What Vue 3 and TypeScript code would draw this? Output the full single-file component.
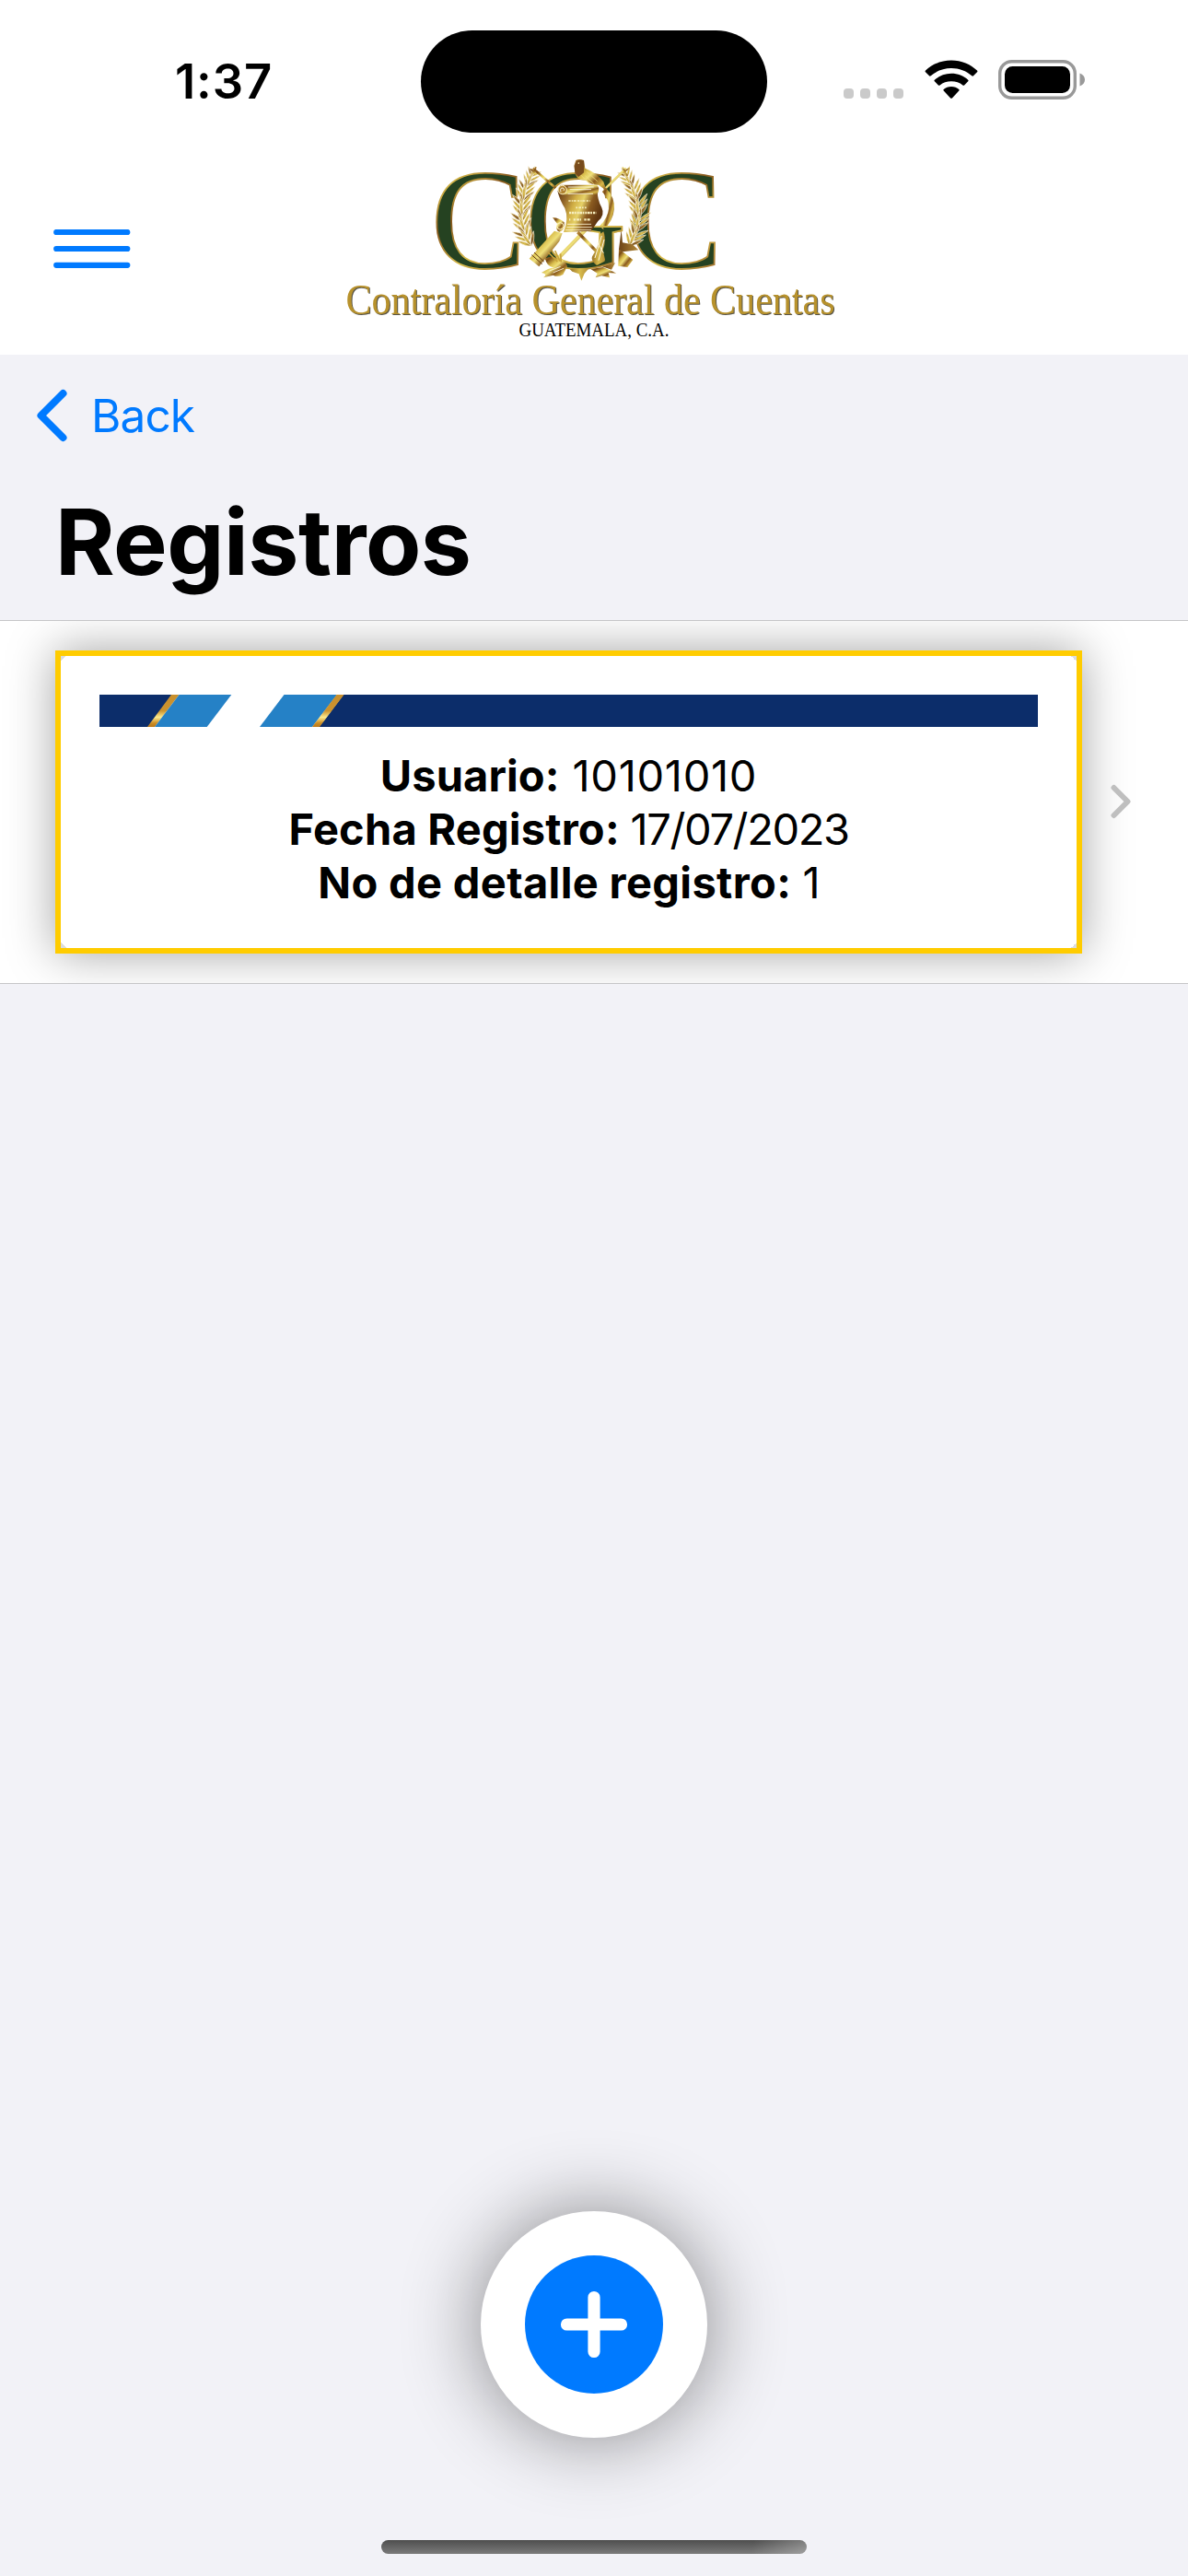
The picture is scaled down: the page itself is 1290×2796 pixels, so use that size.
<script setup lang="ts">
interface Field {
  label: string
  value: string
  spacing: string
  valueSpacing: string
}

const fields: Field[] = [
  { label: 'Usuario:', value: '10101010', spacing: '0.1px', valueSpacing: '0.7px' },
  { label: 'Fecha Registro:', value: '17/07/2023', spacing: '0.2px', valueSpacing: '-1.4px' },
  { label: 'No de detalle registro:', value: '1', spacing: '0.35px', valueSpacing: '-0.9px' },
]

interface Leaf {
  transform: string
  fill: string
}

type Point = [number, number]

// Leaves grow in pairs along each laurel stem, listed from the tip down.
function growLeaves(stem: Point[], perSegment: number): Leaf[] {
  const leaves: Leaf[] = []
  let index = 0
  for (let i = 0; i < stem.length - 1; i++) {
    const [x0, y0] = stem[i]
    const [x1, y1] = stem[i + 1]
    const angle = (Math.atan2(y0 - y1, x0 - x1) * 180) / Math.PI
    for (let j = 0; j < perSegment; j++) {
      const t = j / perSegment
      const x = x0 + (x1 - x0) * t
      const y = y0 + (y1 - y0) * t
      const size = 0.85 + Math.min(index, 5) * 0.06
      for (const side of [-42, -8, 38]) {
        leaves.push({
          transform: `translate(${x.toFixed(1)} ${y.toFixed(1)}) rotate(${(angle + side).toFixed(1)}) scale(${size.toFixed(2)})`,
          fill: (index + (side > 0 ? 1 : 0)) % 3 === 0 ? 'url(#leafDark)' : 'url(#leafLight)',
        })
      }
      index++
    }
  }
  return leaves
}

const leaves: Leaf[] = [
  ...growLeaves([[112, 95], [92, 140], [82, 190], [82, 240], [94, 290], [120, 335]], 3),
  ...growLeaves([[424, 95], [446, 140], [460, 190], [462, 240], [448, 290], [424, 335]], 3),
]
</script>

<template>
  <div class="screen">
    <header class="top">
      <div class="status">
        <div class="time">1:37</div>
        <div class="island"></div>
        <div class="indicators">
          <div class="dots"><i></i><i></i><i></i><i></i></div>
          <svg class="wifi" width="58" height="43" viewBox="0 0 58 43">
            <path d="M29 0.5C40 0.5 50 4.8 57 11.6Q57.8 12.4 57 13.2L53 17.3Q52.2 18.1 51.3 17.3C45.300 12 37.500 9 29 9S12.700 12 6.700 17.300Q5.800 18.100 5 17.300L1 13.200Q0.200 12.400 1 11.600C8 4.800 18 0.500 29 0.500Z" />
            <path d="M29 14.800C36 14.800 42.300 17.400 47.200 21.700Q48 22.500 47.200 23.300L43.100 27.400Q42.300 28.200 41.400 27.400C38 24.600 33.800 23.200 29 23.200S20 24.600 16.600 27.400Q15.700 28.200 14.900 27.400L10.800 23.300Q10 22.500 10.800 21.700C15.700 17.400 22 14.800 29 14.800Z" />
            <path d="M29 29C32.300 29 35.100 30.100 37.300 31.900Q38.200 32.700 37.300 33.600L29.900 41.400Q29 42.300 28.100 41.400L20.700 33.600Q19.800 32.700 20.700 31.900C22.900 30.100 25.700 29 29 29Z" />
          </svg>
          <svg class="battery" width="95" height="43" viewBox="0 0 95 43">
            <rect x="1.700" y="1.700" width="81.600" height="39.600" rx="13" fill="none" stroke="#999" stroke-width="3.400" />
            <rect x="7" y="7" width="71" height="29" rx="8.500" />
            <path d="M88.500 14.500C92 15.800 94 18.500 94 21.500S92 27.200 88.500 28.500Z" fill="#999" />
          </svg>
        </div>
      </div>

      <div class="brand-row">
        <svg class="menu" width="84" height="42" viewBox="0 0 84 42">
          <path d="M3.200 3H80.300M3.200 21H80.300M3.200 38.800H80.300" stroke="#007aff" stroke-width="6.200" stroke-linecap="round" />
        </svg>
        <svg class="logo" width="560" height="220" viewBox="360 160 560 220">
          <defs>
            <linearGradient id="gold" x1="0" y1="0" x2="1" y2="1">
              <stop offset="0" stop-color="#b98a34" />
              <stop offset=".2" stop-color="#7a4a16" />
              <stop offset=".38" stop-color="#d9bd4c" />
              <stop offset=".5" stop-color="#efe07a" />
              <stop offset=".66" stop-color="#8a5a1e" />
              <stop offset=".82" stop-color="#d8b84a" />
              <stop offset="1" stop-color="#7a4a16" />
            </linearGradient>
            <linearGradient id="rim" x1="0" y1="0" x2=".5" y2="1" spreadMethod="reflect">
              <stop offset="0" stop-color="#7a4a16" />
              <stop offset=".25" stop-color="#e2c850" />
              <stop offset=".5" stop-color="#8a5a1e" />
              <stop offset=".75" stop-color="#d9bd4c" />
              <stop offset="1" stop-color="#a87830" />
            </linearGradient>
            <linearGradient id="parchment" x1="0" y1="0" x2="1" y2=".35">
              <stop offset="0" stop-color="#5e3510" />
              <stop offset=".22" stop-color="#94682a" />
              <stop offset=".42" stop-color="#d2b046" />
              <stop offset=".58" stop-color="#e6d268" />
              <stop offset=".76" stop-color="#8a5a20" />
              <stop offset="1" stop-color="#5e3510" />
            </linearGradient>
            <linearGradient id="leafLight" x1="0" y1="0" x2="1" y2="0">
              <stop offset="0" stop-color="#9a7226" />
              <stop offset=".5" stop-color="#d8bc4c" />
              <stop offset="1" stop-color="#b28a34" />
            </linearGradient>
            <linearGradient id="leafDark" x1="0" y1="0" x2="1" y2="0">
              <stop offset="0" stop-color="#6b4216" />
              <stop offset="1" stop-color="#b48a38" />
            </linearGradient>
            <clipPath id="gFront">
              <path d="M634 239.500H680V294H655L660 262L655 247Z" />
            </clipPath>
          </defs>

          <g class="initials" stroke="url(#rim)">
            <text x="468" y="290.300" textLength="103" lengthAdjust="spacingAndGlyphs">C</text>
            <text x="681.500" y="290.300" textLength="103" lengthAdjust="spacingAndGlyphs">C</text>
            <text id="letterG" x="570" y="290.300" textLength="110" lengthAdjust="spacingAndGlyphs">G</text>
          </g>

          <g transform="translate(540 160) scale(.33333)">
            <path
              v-for="(leaf, i) in leaves"
              :key="i"
              :transform="leaf.transform"
              :fill="leaf.fill"
              stroke="#fffbe8"
              stroke-width="1.500"
              d="M0 0Q16 -9 42 0Q18 8 0 0Z"
            />
            <g fill="none" stroke="url(#gold)" stroke-linecap="butt">
              <path d="M116 68L190 132" stroke-width="8" />
              <path d="M420 68L352 134" stroke-width="8" />
              <path d="M108 70L128 88M126 64L118 86M408 64L424 92M430 66L410 84" stroke-width="5" />
              <path d="M348 138C384 176 378 224 340 262" stroke-width="18" />
              <path d="M288 268L188 372" stroke-width="12" />
              <path d="M262 276L336 352" stroke-width="10" />
            </g>
            <path d="M186 272L212 280L202 306L136 388L104 362Z" fill="url(#gold)" />
            <path d="M112 350L146 380M120 342L152 372" stroke="#5e3510" stroke-width="3" />
            <path d="M396 330L442 366L424 390L394 386Z" fill="url(#gold)" />
            <path d="M404 268L408 310L440 316L460 334L408 340L396 332Z" fill="url(#leafDark)" />

            <path d="M346 274Q356 304 344 334L352 370L324 384Q300 366 312 350Q334 318 332 284Z" fill="url(#leafLight)" />
            <path d="M340 288L318 360M348 300L330 368M326 310L346 344" stroke="#fffbe8" stroke-width="3" />

            <path d="M156 362Q176 350 200 362Q224 366 228 388L214 414Q196 424 182 416L150 424Q166 412 144 408Q168 392 184 392Q160 386 156 362Z" fill="url(#gold)" />
            <path d="M166 342L196 372M188 336L204 370M206 346L208 374" stroke="#c9a43e" stroke-width="5" />
            <path d="M170 402L206 388M182 408L216 394" stroke="#fffbe8" stroke-width="2.500" />
            <path d="M236 396L300 392L284 410L274 434L266 412L244 404Z" fill="url(#leafLight)" />
            <path d="M304 396L344 390Q362 396 388 410L362 408L366 424L340 418L320 424L326 410Z" fill="url(#gold)" />
            <path d="M342 388L384 376L372 398Z" fill="url(#leafDark)" />

            <path d="M196 142L326 140Q326 170 340 196Q352 222 328 240L306 272L216 276Q234 232 220 198Q204 174 196 142Z" fill="url(#parchment)" />
            <path d="M206 122H324Q338 134 324 154H212Q196 138 206 122Z" fill="url(#gold)" />
            <path d="M230 129H314M230 151H312M236 137H306" fill="none" stroke="#fffdf0" stroke-width="2.500" />
            <circle cx="212" cy="138" r="14" fill="#b18330" stroke="#f6edc0" stroke-width="3" />
            <path d="M207 145Q203 132 213 132Q221 135 216 141" fill="none" stroke="#fff" stroke-width="2.500" />
            <path d="M180 228Q204 230 218 244Q222 268 202 276Q186 268 196 250Z" fill="url(#gold)" />
            <circle cx="205" cy="256" r="11" fill="none" stroke="#fff3c0" stroke-width="3" />
            <path d="M232 174H302" stroke="#f6eebf" stroke-width="5" stroke-dasharray="7 3 4 2 9 4" />
            <path d="M256 196H290" stroke="#f6eebf" stroke-width="5" stroke-dasharray="5 4 8 3" />
            <path d="M234 213H322" stroke="#f6eebf" stroke-width="8" stroke-dasharray="6 2 8 2 5 3" />
            <path d="M234 235H304" stroke="#f6eebf" stroke-width="7" stroke-dasharray="4 10 7 3 9 2" />
            <path d="M228 250H306M226 260H308M222 269H306" stroke="#fff8d8" stroke-width="2.500" />

            <path d="M250 60L256 42Q266 36 282 42L286 68Q324 82 346 112L356 142L330 122Q306 124 288 106Q264 110 254 88Z" fill="url(#gold)" />
            <path d="M252 62L258 44Q270 38 282 44L282 82L264 96L254 84Z" fill="#784b1c" />
            <path d="M272 90L302 120M286 92L316 120M292 80L326 110" stroke="#f0dc80" stroke-width="2.500" />
            <circle cx="265" cy="51" r="2.500" fill="#fff0b0" />
          </g>

          <g class="initials" stroke="url(#rim)" clip-path="url(#gFront)">
            <use href="#letterG" />
          </g>

          <text class="name" x="375.500" y="341" textLength="531" lengthAdjust="spacingAndGlyphs">Contraloría General de Cuentas</text>
          <text class="country" x="563.500" y="365" textLength="163" lengthAdjust="spacingAndGlyphs">GUATEMALA, C.A.</text>
        </svg>
      </div>
    </header>

    <nav class="nav">
      <svg width="34" height="58" viewBox="0 0 34 58">
        <path d="M28.500 5L4.500 29L28.500 53" fill="none" stroke="#007aff" stroke-width="8" stroke-linecap="round" stroke-linejoin="round" />
      </svg>
      <span class="back">Back</span>
    </nav>
    <h1 class="title">Registros</h1>

    <section class="row">
      <article class="card">
        <svg class="ribbon" width="1019" height="35" viewBox="0 0 1019 35">
          <defs>
            <linearGradient id="ribbonGold" x1="0" y1="0" x2="0" y2="1">
              <stop offset="0" stop-color="#c88f2c" />
              <stop offset=".5" stop-color="#cd942f" />
              <stop offset=".7" stop-color="#fdea8c" />
              <stop offset=".88" stop-color="#cc8d24" />
              <stop offset="1" stop-color="#b8781a" />
            </linearGradient>
          </defs>
          <path d="M0 0H79L53 35H0Z" fill="#0c2d6a" />
          <path d="M78 0H86.500L60 35H52Z" fill="url(#ribbonGold)" />
          <path d="M86.500 0H143.300L116.700 35H60Z" fill="#2581c6" />
          <path d="M200.500 0H258L231 35H174Z" fill="#2581c6" />
          <path d="M265 0H1019V35H238.500Z" fill="#0c2d6a" />
          <path d="M257.500 0H265.500L239 35H231Z" fill="url(#ribbonGold)" />
        </svg>
        <p v-for="field in fields" :key="field.label" class="field">
          <b :style="{ letterSpacing: field.spacing }">{{ field.label }}</b>
          <span :style="{ letterSpacing: field.valueSpacing }">{{ ' ' + field.value }}</span>
        </p>
      </article>
      <svg class="chevron" width="22" height="38" viewBox="0 0 22 38">
        <path d="M3.500 4L18.500 19L3.500 34" fill="none" stroke="#bfbfbf" stroke-width="6" stroke-linecap="round" stroke-linejoin="round" />
      </svg>
    </section>

    <div class="spacer"></div>
    <button class="fab" aria-label="Agregar">
      <svg width="150" height="150" viewBox="0 0 150 150">
        <circle cx="75" cy="75" r="75" fill="#007aff" />
        <path d="M75 45.500V104.500M45.500 75H104.500" stroke="#fff" stroke-width="13.200" stroke-linecap="round" />
      </svg>
    </button>
    <div class="home"></div>
  </div>
</template>

<style>
body {
  margin: 0;
  background: #f2f2f7;
}
</style>

<style scoped>
.screen {
  width: 1290px;
  height: 2796px;
  display: flex;
  flex-direction: column;
  background: #f2f2f7;
  color: #000;
  font-family: Inter, "Liberation Sans", sans-serif;
  overflow: hidden;
}
.top {
  height: 385px;
  background: #fff;
  flex: none;
}
.status {
  height: 160px;
  display: flex;
  align-items: flex-start;
}
.time {
  box-sizing: border-box;
  width: 457px;
  padding: 56px 0 0 190px;
  font-size: 52.500px;
  line-height: 64px;
  font-weight: 600;
  letter-spacing: 0.900px;
}
.island {
  width: 376px;
  height: 111px;
  margin-top: 33px;
  border-radius: 56px;
  background: #000;
}
.indicators {
  display: flex;
  align-items: flex-end;
  height: 43px;
  margin: 65px 0 0 83px;
}
.dots {
  display: flex;
  gap: 7px;
  padding-bottom: 1px;
}
.dots i {
  width: 11px;
  height: 11px;
  border-radius: 4px;
  background: #cacaca;
}
.wifi {
  margin-left: 23px;
  margin-right: 22px;
}
.brand-row {
  display: flex;
  height: 220px;
}
.menu {
  margin: 89px 218px 0 58px;
}
.initials {
  font: 154px "Liberation Serif", serif;
  fill: #254221;
  stroke-width: 1.800px;
}
.name {
  font: 46px "Liberation Serif", serif;
  fill: #b8922c;
  filter: drop-shadow(1.300px 1.200px 0 #55534a);
}
.country {
  font: 20px "Liberation Serif", serif;
}
.nav {
  height: 132px;
  padding: 0 40px;
  display: flex;
  align-items: center;
  gap: 25px;
  flex: none;
}
.back {
  color: #007aff;
  font-size: 49.500px;
  letter-spacing: -0.900px;
}
.title {
  margin: 0;
  height: 156px;
  padding: 12px 60px 0;
  box-sizing: border-box;
  font-size: 98.500px;
  line-height: 120px;
  font-weight: 700;
  letter-spacing: -0.450px;
  flex: none;
}
.row {
  box-sizing: border-box;
  height: 395px;
  border-top: 1px solid #c6c6c8;
  border-bottom: 1px solid #c6c6c8;
  background: #fff;
  padding-left: 60px;
  display: flex;
  align-items: center;
  flex: none;
  overflow: hidden;
}
.card {
  box-sizing: border-box;
  width: 1115px;
  height: 329px;
  border: 6px solid #fc0;
  box-shadow: 0 0 48px rgba(0, 0, 0, 0.36);
  padding: 42px 42px 0;
  background:
    linear-gradient(135deg, #dcdcdc 50%, transparent 50%) left top / 6px 6px no-repeat,
    linear-gradient(225deg, #dcdcdc 50%, transparent 50%) right top / 6px 6px no-repeat,
    linear-gradient(45deg, #dcdcdc 50%, transparent 50%) left bottom / 6px 6px no-repeat,
    linear-gradient(315deg, #dcdcdc 50%, transparent 50%) right bottom / 6px 6px no-repeat,
    #fff;
}
.ribbon {
  display: block;
  margin-bottom: 24px;
}
.field {
  margin: 0;
  height: 58px;
  line-height: 58px;
  font-size: 47px;
  text-align: center;
  white-space: pre;
}
.field b {
  font-weight: 700;
}
.chevron {
  margin: 0 0 1px 31px;
}
.spacer {
  flex: 1;
}
.fab {
  width: 246px;
  height: 246px;
  margin: 0 auto 111px;
  padding: 0;
  border: 0;
  border-radius: 50%;
  background: #fff;
  box-shadow: 0 0 84px rgba(0, 0, 0, 0.45);
  display: flex;
  align-items: center;
  justify-content: center;
  flex: none;
}
.home {
  width: 462px;
  height: 15px;
  margin: 0 auto 24px;
  border-radius: 8px;
  background:
    linear-gradient(100deg, transparent 87%, rgba(255, 255, 255, 0.28) 100%),
    linear-gradient(#4e4e4e, #7b7b7b);
  flex: none;
}
</style>
